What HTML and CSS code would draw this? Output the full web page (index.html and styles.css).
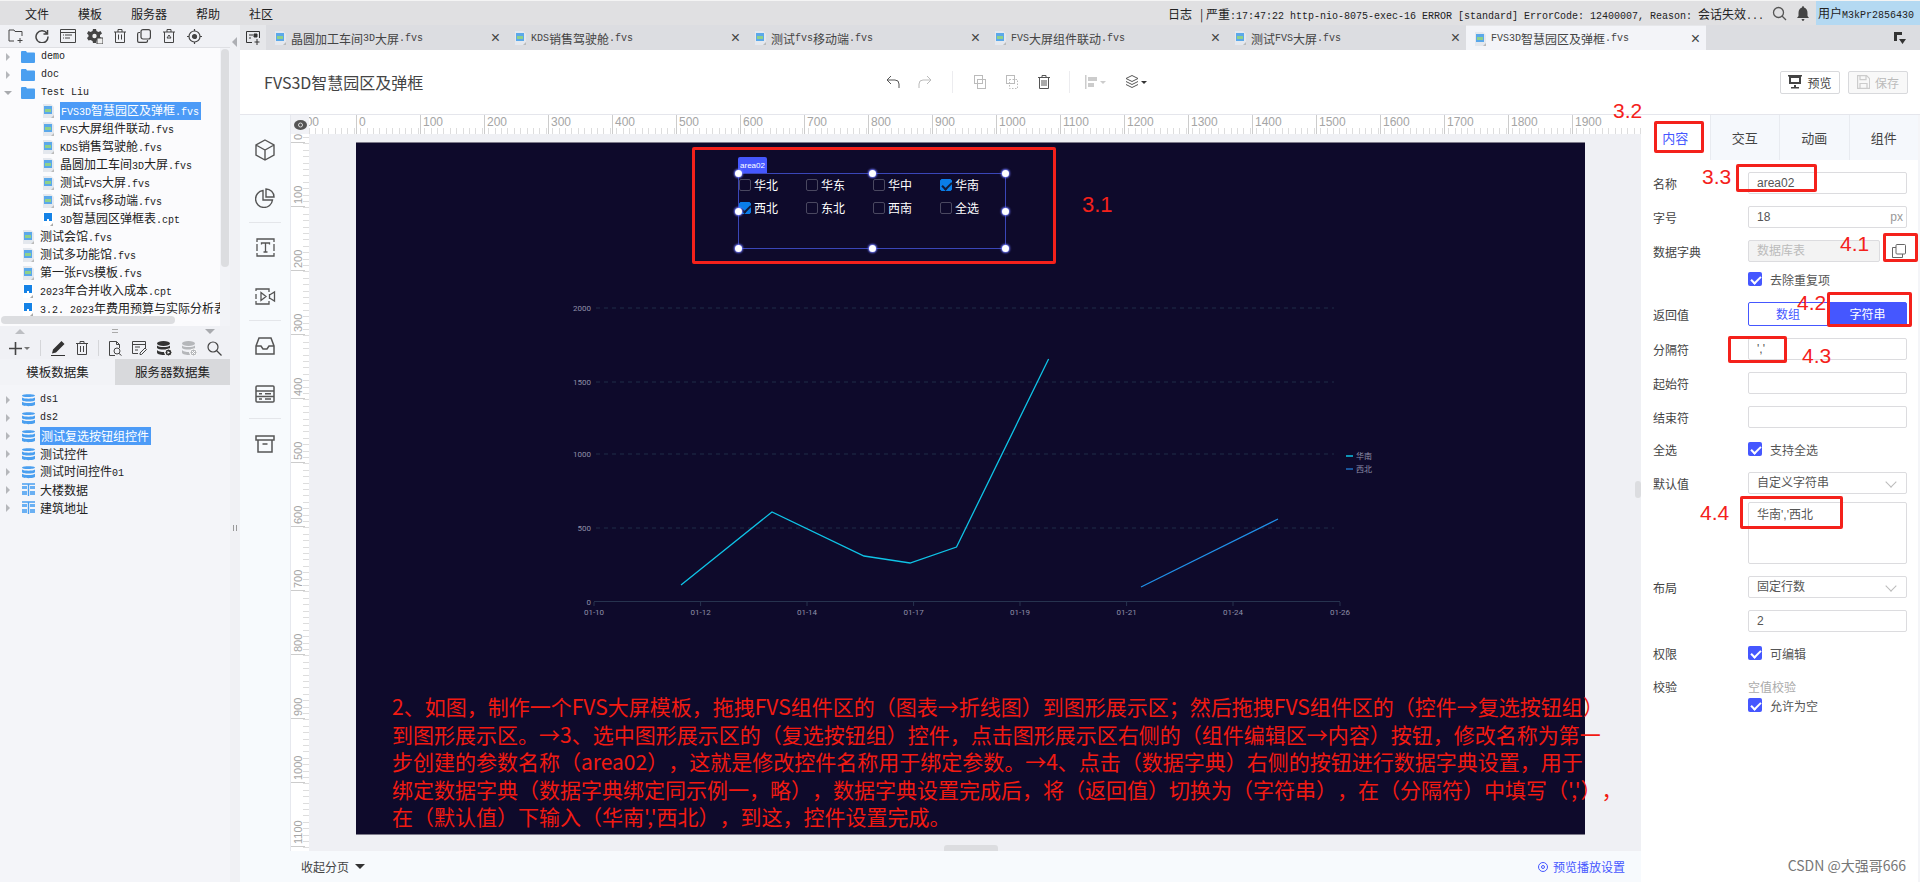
FILE: index.html
```html
<!DOCTYPE html>
<html>
<head>
	<meta charset="utf-8">
	<title>FVS3D智慧园区及弹框</title>
	<link rel="stylesheet" href="styles.css">
</head>
<body>
<svg class="sprite" width="0" height="0">
	<symbol id="i-fvs" viewBox="0 0 12 14"><path d="M1 0h8l3 3v11H1z" fill="#e4e8ee"/><rect x="2" y="2" width="8" height="8" fill="#5aa8ea"/><rect x="3" y="5" width="6" height="3" fill="#8fd08a"/><path d="M9 14l3-3v3z" fill="#bbb"/></symbol>
	<symbol id="i-cpt" viewBox="0 0 12 14"><path d="M1 0h10v14H1z" fill="#fff"/><path d="M2 1h8v8H7V7H5v2H2z" fill="#1582e6"/><path d="M8 14l3-3v3z" fill="#aaa"/></symbol>
	<symbol id="i-folder" viewBox="0 0 14 12"><path d="M0 1q0-1 1-1h4l1 1.500h7q1 0 1 1V11q0 1-1 1H1q-1 0-1-1z" fill="#4a9ff0"/></symbol>
	<symbol id="i-db" viewBox="0 0 13 14"><g fill="#4a9ff0"><path d="M0 2.500C0 .8 13 .8 13 2.500S0 5 0 2.500z"/><path d="M0 4.500c2 1.600 11 1.600 13 0V7c0 2-13 2-13 0z"/><path d="M0 8.800c2 1.600 11 1.600 13 0V11.500c0 2.200-13 2.200-13 0z"/></g></symbol>
	<symbol id="i-table" viewBox="0 0 13 14"><path d="M0 1h13M6.500 1v12" stroke="#4a9ff0" stroke-width="1.400"/><g fill="#6ab0f3"><rect y="3" width="5" height="3"/><rect x="8" y="3" width="5" height="3"/><rect y="8" width="5" height="4"/><rect x="8" y="8" width="5" height="4"/></g></symbol>
</svg>

<div class="topbar">
	<div class="menu"><span>文件</span><span>模板</span><span>服务器</span><span>帮助</span><span>社区</span></div>
	<div class="log">日志</div>
	<div class="log-msg">| 严重<span class="m">:17:47:22 http-nio-8075-exec-16 ERROR [standard] ErrorCode: 12400007, Reason: </span>会话失效<span class="m">...</span></div>
	<svg class="top-icon" width="15" height="15" viewBox="0 0 15 15" fill="none" stroke="#555" stroke-width="1.300"><circle cx="6.500" cy="6.500" r="5"/><path d="M10 10l4 4"/></svg>
	<svg class="top-icon bell" width="12" height="15" viewBox="0 0 12 15" fill="#444"><path d="M6 0q1 0 1 1.500Q10.500 2.500 10.500 7v3l1.500 2H0l1.500-2V7Q1.500 2.500 5 1.500 5 0 6 0zM4.500 13h3q-.5 2-1.500 2t-1.500-2z"/></svg>
	<div class="user">用户<span class="m">M3kPr2856430</span></div>
</div>

<div class="main">
	<aside class="sidebar">
		<div class="side-tools">
			<svg width="16" height="14" viewBox="0 0 16 14" fill="none" stroke="#444"><path d="M6 12H1V1h5l1 1.500h7V7M12 9v5M9.500 11.500h5"/></svg>
			<svg width="14" height="14" viewBox="0 0 14 14" fill="none" stroke="#444" stroke-width="1.500"><path d="M12 4.500A6 6 0 1 0 13 7.500M12.500 1v4h-4"/></svg>
			<svg width="16" height="14" viewBox="0 0 16 14" fill="none" stroke="#444"><path d="M.500.500h15v13H.500zM.500 3.500h15M5 6h7M5 9h5M3 6h1M3 9h1"/></svg>
			<svg width="16" height="15" viewBox="0 0 16 15" fill="#444"><path d="M6 0h3l.5 2 2 1 2-1 1.500 2.500L13 6v2l1.500 1-1 2-2.500-.5-1.500 1L9 14H6l-.5-2-2-1-2 .5L0 9l1.500-1.500V6L0 4.500 1.500 2l2 1 2-1z"/><circle cx="7.500" cy="7" r="2.200" fill="#eee"/><rect x="10" y="9" width="6" height="6" fill="#eee" stroke="#444"/></svg>
			<svg width="12" height="14" viewBox="0 0 12 14" fill="none" stroke="#444"><path d="M0 3h12M4 3V.500h4V3M1.500 3v10.500h9V3M4.500 5.500v5M7.500 5.500v5"/></svg>
			<svg width="14" height="14" viewBox="0 0 14 14" fill="none" stroke="#444" stroke-width="1.200"><rect x="4" y=".6" width="9.400" height="9.400" rx="2"/><path d="M3 3.500H2Q.6 3.500.6 5v7q0 1.400 1.400 1.400h7Q10.500 13.400 10.500 12v-1"/></svg>
			<svg width="14" height="14" viewBox="0 0 14 14" fill="none" stroke="#444"><path d="M1 3h12M5 3V.500h4V3M2.500 3v10.500h9V3M7 6l-2 3h4z"/></svg>
			<svg width="15" height="15" viewBox="0 0 15 15" fill="none" stroke="#444" stroke-width="1.200"><circle cx="7.500" cy="7.500" r="5.500"/><circle cx="7.500" cy="7.500" r="2" fill="#444"/><path d="M7.500 0v2M7.500 13v2M0 7.500h2M13 7.500h2"/></svg>
		</div>
		<div class="file-tree">
			<div class="tree-scroll"></div>
			<div class="tree-scroll-h"></div>
			<div class="tree-row"><i class="arrow"></i><svg class="folder"><use href="#i-folder"/></svg><span class="name m">demo</span></div>
			<div class="tree-row"><i class="arrow"></i><svg class="folder"><use href="#i-folder"/></svg><span class="name m">doc</span></div>
			<div class="tree-row"><i class="arrow open"></i><svg class="folder"><use href="#i-folder"/></svg><span class="name m">Test Liu</span></div>
			<div class="tree-row child"><svg class="file"><use href="#i-fvs"/></svg><span class="name selected"><span class="m">FVS3D</span>智慧园区及弹框<span class="m">.fvs</span></span></div>
			<div class="tree-row child"><svg class="file"><use href="#i-fvs"/></svg><span class="name"><span class="m">FVS</span>大屏组件联动<span class="m">.fvs</span></span></div>
			<div class="tree-row child"><svg class="file"><use href="#i-fvs"/></svg><span class="name"><span class="m">KDS</span>销售驾驶舱<span class="m">.fvs</span></span></div>
			<div class="tree-row child"><svg class="file"><use href="#i-fvs"/></svg><span class="name">晶圆加工车间<span class="m">3D</span>大屏<span class="m">.fvs</span></span></div>
			<div class="tree-row child"><svg class="file"><use href="#i-fvs"/></svg><span class="name">测试<span class="m">FVS</span>大屏<span class="m">.fvs</span></span></div>
			<div class="tree-row child"><svg class="file"><use href="#i-fvs"/></svg><span class="name">测试<span class="m">fvs</span>移动端<span class="m">.fvs</span></span></div>
			<div class="tree-row child"><svg class="file"><use href="#i-cpt"/></svg><span class="name"><span class="m">3D</span>智慧园区弹框表<span class="m">.cpt</span></span></div>
			<div class="tree-row root-file"><svg class="file"><use href="#i-fvs"/></svg><span class="name">测试会馆<span class="m">.fvs</span></span></div>
			<div class="tree-row root-file"><svg class="file"><use href="#i-fvs"/></svg><span class="name">测试多功能馆<span class="m">.fvs</span></span></div>
			<div class="tree-row root-file"><svg class="file"><use href="#i-fvs"/></svg><span class="name">第一张<span class="m">FVS</span>模板<span class="m">.fvs</span></span></div>
			<div class="tree-row root-file"><svg class="file"><use href="#i-cpt"/></svg><span class="name"><span class="m">2023</span>年合并收入成本<span class="m">.cpt</span></span></div>
			<div class="tree-row root-file"><svg class="file"><use href="#i-cpt"/></svg><span class="name"><span class="m">3.2. 2023</span>年费用预算与实际分析表</span></div>
		</div>
		<div class="side-split"><i class="up"></i><i class="grip"></i><i class="down"></i></div>
		<div class="data-tools">
			<svg width="13" height="13" viewBox="0 0 13 13" stroke="#444" stroke-width="1.600"><path d="M6.500 0v13M0 6.500h13"/></svg>
			<i class="caret"></i>
			<b class="tool-line"></b>
			<svg width="15" height="15" viewBox="0 0 15 15" fill="#333"><path d="M10.500 0l3 3-8.500 8.500-4 1 1-4zM0 14h14v1H0z"/></svg>
			<svg width="12" height="14" viewBox="0 0 12 14" fill="none" stroke="#444"><path d="M0 2.500h12M4 2.500V.500h4v2M1.500 2.500v11h9v-11M4.500 5v6M7.500 5v6"/></svg>
			<b class="tool-line"></b>
			<svg width="13" height="15" viewBox="0 0 13 15" fill="none" stroke="#444"><path d="M6 14.500H.500V.500h7l3 3V7M7.500.500v3h3"/><circle cx="8" cy="10" r="3"/><path d="M10 12.500l2.500 2"/></svg>
			<svg width="15" height="14" viewBox="0 0 15 14" fill="none" stroke="#444"><path d="M6 12.500H.500V.500h13V7M.500 3.500h13M3 6h5M3 9h3"/><path d="M8 12l5-5 1.500 1.500-5 5H8z"/></svg>
			<svg width="15" height="15" viewBox="0 0 15 15" fill="#333"><ellipse cx="6.500" cy="2.500" rx="6.500" ry="2.500"/><path d="M0 4.500c2 2 11 2 13 0V7c-2 2-11 2-13 0zM0 9c2 2 6 2 7 2l1 3c-3 0-8-.5-8-2.500z"/><circle cx="11.500" cy="11.500" r="3.500" stroke="#fff"/><path d="M10.500 10l2.500 1.500-2.500 1.500z" fill="#fff"/></svg>
			<svg width="15" height="15" viewBox="0 0 15 15" fill="#b5b7ba"><ellipse cx="6.500" cy="2.500" rx="6.500" ry="2.500"/><path d="M0 4.500c2 2 11 2 13 0V7c-2 2-11 2-13 0zM0 9c2 2 6 2 7 2l1 3c-3 0-8-.5-8-2.500z"/><circle cx="11.500" cy="11.500" r="3.500" stroke="#fff"/><path d="M10 10l3 3M13 10l-3 3" stroke="#fff"/></svg>
			<svg width="15" height="15" viewBox="0 0 15 15" fill="none" stroke="#444" stroke-width="1.200"><circle cx="6" cy="6" r="5"/><path d="M9.500 9.500l5 5"/></svg>
		</div>
		<div class="data-tabs"><div class="data-tab on">模板数据集</div><div class="data-tab">服务器数据集</div></div>
		<div class="data-tree">
			<div class="tree-row ds"><i class="arrow"></i><svg class="db"><use href="#i-db"/></svg><span class="name m">ds1</span></div>
			<div class="tree-row ds"><i class="arrow"></i><svg class="db"><use href="#i-db"/></svg><span class="name m">ds2</span></div>
			<div class="tree-row ds"><i class="arrow"></i><svg class="db"><use href="#i-db"/></svg><span class="name selected">测试复选按钮组控件</span></div>
			<div class="tree-row ds"><i class="arrow"></i><svg class="db"><use href="#i-db"/></svg><span class="name">测试控件</span></div>
			<div class="tree-row ds"><i class="arrow"></i><svg class="db"><use href="#i-db"/></svg><span class="name">测试时间控件<span class="m">01</span></span></div>
			<div class="tree-row ds"><i class="arrow"></i><svg class="db"><use href="#i-table"/></svg><span class="name">大楼数据</span></div>
			<div class="tree-row ds"><i class="arrow"></i><svg class="db"><use href="#i-table"/></svg><span class="name">建筑地址</span></div>
		</div>
	</aside>

	<div class="splitter"><i class="left-arrow"></i><i class="bars"></i></div>

	<div class="content">
		<div class="tabbar">
			<div class="tab-add"><svg width="15" height="14" viewBox="0 0 15 14" fill="none" stroke="#333"><path d="M6 11.500H.500V.500h13V7M3 4h4M3 7h2M11 8v6M8.500 11h5"/><path d="M8 3h3v3H8z" fill="#333"/></svg></div>
			<div class="tab"><svg class="file"><use href="#i-fvs"/></svg>晶圆加工车间<span class="m">3D</span>大屏<span class="m">.fvs</span><em>×</em></div>
			<div class="tab"><svg class="file"><use href="#i-fvs"/></svg><span class="m">KDS</span>销售驾驶舱<span class="m">.fvs</span><em>×</em></div>
			<div class="tab"><svg class="file"><use href="#i-fvs"/></svg>测试<span class="m">fvs</span>移动端<span class="m">.fvs</span><em>×</em></div>
			<div class="tab"><svg class="file"><use href="#i-fvs"/></svg><span class="m">FVS</span>大屏组件联动<span class="m">.fvs</span><em>×</em></div>
			<div class="tab"><svg class="file"><use href="#i-fvs"/></svg>测试<span class="m">FVS</span>大屏<span class="m">.fvs</span><em>×</em></div>
			<div class="tab active"><svg class="file"><use href="#i-fvs"/></svg><span class="m">FVS3D</span>智慧园区及弹框<span class="m">.fvs</span><em>×</em></div>
			<svg class="tab-more" width="12" height="13" viewBox="0 0 12 13" fill="#333"><path d="M0 0h8v3H3v6H0zM5 7h7l-3.500 5z"/></svg>
		</div>

		<div class="titlebar">
			<h1>FVS3D智慧园区及弹框</h1>
			<div class="tools">
				<div class="tool"><svg width="14" height="14" viewBox="0 0 14 14" fill="none" stroke="#555"><path d="M5 1L1 5l4 4M1 5h8q4 0 4 4v4"/></svg></div>
				<div class="tool"><svg width="14" height="14" viewBox="0 0 14 14" fill="none" stroke="#bbb"><path d="M9 1l4 4-4 4M13 5H5q-4 0-4 4v4"/></svg></div>
				<b class="tool-sep"></b>
				<div class="tool"><svg width="12" height="14" viewBox="0 0 12 14" fill="none" stroke="#bbb"><rect x=".5" y=".5" width="8" height="8"/><rect x="3.500" y="4.500" width="8" height="9"/></svg></div>
				<div class="tool"><svg width="12" height="14" viewBox="0 0 12 14" fill="none" stroke="#bbb"><rect x=".5" y=".5" width="8" height="8"/><rect x="3.500" y="4.500" width="8" height="9" stroke-dasharray="1.500"/></svg></div>
				<div class="tool"><svg width="12" height="14" viewBox="0 0 12 14" fill="none" stroke="#555"><path d="M0 2.500h12M4 2.500V.500h4v2M1.500 2.500v11h9v-11" /><path d="M4 5v6M6 5v6M8 5v6"/></svg></div>
				<b class="tool-sep sep-b"></b>
				<div class="tool"><svg width="12" height="14" viewBox="0 0 12 14" fill="#ccc"><path d="M0 0h1.500v14H0zM3 2h9v4H3zM3 8h6v4H3z"/></svg><i class="caret light"></i></div>
				<div class="tool tool-last"><svg width="14" height="15" viewBox="0 0 14 15" fill="none" stroke="#555"><path d="M7 .5l6 3-6 3-6-3zM1 6.500l6 3 6-3M1 9.500l6 3 6-3"/></svg><i class="caret dark"></i></div>
			</div>
			<div class="actions">
				<div class="btn"><svg width="14" height="14" viewBox="0 0 14 14" fill="#444"><path d="M0 0h14v1.500h-1V9H1V1.500H0zM3 3v4h8V3zM6 10h2v2h3v1.500H3V12h3z"/></svg>预览</div>
				<div class="btn off"><svg width="13" height="14" viewBox="0 0 13 14" fill="none" stroke="#ccc" stroke-width="1.200"><path d="M.6.6h9l3 3v9.800H.6zM3 .6v4h6v-4M3 13V8.500h7V13"/></svg>保存</div>
			</div>
		</div>

		<div class="work">
			<div class="stage">
				<div class="stage-row">
					<nav class="widget-bar">
						<div class="slot"><svg width="20" height="22" viewBox="0 0 20 22" fill="none" stroke="#555" stroke-width="1.400"><path d="M10 1l9 5v10l-9 5-9-5V6zM1 6l9 5 9-5M10 11v10"/></svg></div>
						<div class="slot line"><svg width="20" height="20" viewBox="0 0 20 20" fill="none" stroke="#555" stroke-width="1.400"><path d="M8 2.500a8.500 8.500 0 1 0 9.500 9.500H8zM11 1v8h8a8 8 0 0 0-8-8z"/></svg></div>
						<div class="slot"><svg width="19" height="19" viewBox="0 0 19 19" fill="none" stroke="#555" stroke-width="1.300"><path d="M1 4V1h17v3M1 15v3h17v-3M1 6v7M18 6v7M5.500 6.500V5h8v1.500M9.500 5v9M7.500 14h4"/></svg></div>
						<div class="slot line"><svg width="21" height="17" viewBox="0 0 21 17" fill="none" stroke="#555" stroke-width="1.300"><path d="M1 3V1h13v3M1 13v3h13v-3M1 6v5M14.500 6v5M14.500 7l5-3v9l-5-3M6 4.500l5 4-5 4z"/></svg></div>
						<div class="slot"><svg width="20" height="18" viewBox="0 0 20 18" fill="none" stroke="#555" stroke-width="1.500"><path d="M1 9l3-8h12l3 8v8H1zM1 9h5l2 3h4l2-3h5"/></svg></div>
						<div class="slot line"><svg width="20" height="18" viewBox="0 0 20 18" fill="none" stroke="#555" stroke-width="1.500"><rect x="1" y="1" width="18" height="16" rx="1"/><path d="M1 6h18M1 11.500h18M4 8.800h3M10 8.800h6M4 14h3M10 14h6"/></svg></div>
						<div class="slot"><svg width="20" height="18" viewBox="0 0 20 18" fill="none" stroke="#555" stroke-width="1.500"><path d="M1 1h18v4H1zM3 5v12h14V5M7.500 9h5"/></svg></div>
					</nav>
					<div class="ruler-side">
						<div class="eye"><svg width="13" height="10" viewBox="0 0 13 10"><ellipse cx="6.500" cy="5" rx="6.500" ry="5" fill="#555"/><circle cx="6.500" cy="5" r="2" fill="none" stroke="#ddd"/></svg></div>
						<div class="ruler-v">
							<span>0</span><span>100</span><span>200</span><span>300</span><span>400</span><span>500</span><span>600</span><span>700</span><span>800</span><span>900</span><span>1000</span><span>1100</span>
						</div>
					</div>
					<div class="canvas-wrap">
						<div class="ruler-h">
							<span>-100</span><span>0</span><span>100</span><span>200</span><span>300</span><span>400</span><span>500</span><span>600</span><span>700</span><span>800</span><span>900</span><span>1000</span><span>1100</span><span>1200</span><span>1300</span><span>1400</span><span>1500</span><span>1600</span><span>1700</span><span>1800</span><span>1900</span>
						</div>
						<div class="canvas-area">
							<div class="canvas">
								<div class="combo">
									<div class="combo-tag">area02</div>
									<div class="combo-grid">
										<label class="opt"><i></i>华北</label><label class="opt"><i></i>华东</label><label class="opt"><i></i>华中</label><label class="opt"><i class="on"></i>华南</label>
										<label class="opt"><i class="on"></i>西北</label><label class="opt"><i></i>东北</label><label class="opt"><i></i>西南</label><label class="opt"><i></i>全选</label>
									</div>
									<u class="dot tl"></u><u class="dot tc"></u><u class="dot tr"></u><u class="dot ml"></u><u class="dot mr"></u><u class="dot bl"></u><u class="dot bc"></u><u class="dot br"></u>
								</div>

								<svg class="chart" width="760" height="340" viewBox="0 0 760 340">
									<g stroke="#1f2c49" stroke-dasharray="4 4">
										<path d="M2 20H740M2 94H740M2 166H740M2 240H740"/>
									</g>
									<path d="M0 313.500H746" stroke="#27334f"/>
									<path d="M0 314v4M106.600 314v4M213 314v4M319.600 314v4M426 314v4M532.600 314v4M639 314v4M746 314v4" stroke="#27334f"/>
									<g class="axis" text-anchor="end">
										<text x="-3" y="23">2000</text><text x="-3" y="97">1500</text><text x="-3" y="169">1000</text><text x="-3" y="243">500</text><text x="-3" y="317">0</text>
									</g>
									<g class="axis" text-anchor="middle">
										<text x="0" y="327">01-10</text><text x="106.600" y="327">01-12</text><text x="213" y="327">01-14</text><text x="319.600" y="327">01-17</text><text x="426" y="327">01-19</text><text x="532.600" y="327">01-21</text><text x="639" y="327">01-24</text><text x="746" y="327">01-26</text>
									</g>
									<polyline points="87,297 178,224 270,268 316,275 362.500,259 454.600,71" fill="none" stroke="#0fc3e6" stroke-width="1.300"/>
									<polyline points="547,299 684,231" fill="none" stroke="#2190e8" stroke-width="1.300"/>
									<path d="M752 168h7" stroke="#0fc3e6" stroke-width="1.500"/>
									<path d="M752 181h7" stroke="#1f6fc0" stroke-width="1.500"/>
									<text class="axis" x="762" y="171">华南</text>
									<text class="axis" x="762" y="184">西北</text>
								</svg>

								<div class="note">
									<div>2、如图，制作一个FVS大屏模板，拖拽FVS组件区的（图表→折线图）到图形展示区；然后拖拽FVS组件区的（控件→复选按钮组）</div>
									<div>到图形展示区。→3、选中图形展示区的（复选按钮组）控件，点击图形展示区右侧的（组件编辑区→内容）按钮，修改名称为第一</div>
									<div>步创建的参数名称（area02），这就是修改控件名称用于绑定参数。→4、点击（数据字典）右侧的按钮进行数据字典设置，用于</div>
									<div>绑定数据字典（数据字典绑定同示例一，略），数据字典设置完成后，将（返回值）切换为（字符串），在（分隔符）中填写（','），</div>
									<div>在（默认值）下输入（华南','西北），到这，控件设置完成。</div>
								</div>
							</div>
							<div class="handle-v"></div>
							<div class="handle-h"></div>
						</div>
					</div>
				</div>
				<div class="pager">
					<div class="pager-left">收起分页<i class="caret dark big"></i></div>
					<div class="pager-right"><svg width="10" height="10" viewBox="0 0 10 10" fill="none" stroke="#4557ff"><circle cx="5" cy="5" r="4.500"/><circle cx="5" cy="5" r="1.500"/></svg>预览播放设置</div>
				</div>
			</div>

			<aside class="panel">
				<div class="panel-tabs"><div class="panel-tab on">内容</div><div class="panel-tab">交互</div><div class="panel-tab">动画</div><div class="panel-tab">组件</div></div>
				<div class="form">
					<div class="row"><label>名称</label><div class="field">area02</div></div>
					<div class="row"><label>字号</label><div class="field between">18<span class="unit">px</span></div></div>
					<div class="row row-s"><label>数据字典</label><div class="field disabled">数据库表</div>
						<svg class="dict-icon" width="14" height="14" viewBox="0 0 14 14" fill="none" stroke="#666"><rect x="4" y=".5" width="9.500" height="9.500" rx="1"/><path d="M4 3.500H.5v10h10V10"/></svg>
					</div>
					<div class="row check-row row-t"><label></label><span class="check"></span><span class="check-text">去除重复项</span></div>
					<div class="row seg-row"><label>返回值</label><div class="seg">数组</div><div class="seg on">字符串</div></div>
					<div class="row"><label>分隔符</label><div class="field">','</div></div>
					<div class="row"><label>起始符</label><div class="field"></div></div>
					<div class="row row-m"><label>结束符</label><div class="field"></div></div>
					<div class="row check-row row-t"><label>全选</label><span class="check"></span><span class="check-text">支持全选</span></div>
					<div class="row row-xs"><label>默认值</label><div class="field between">自定义字符串<i class="chev"></i></div></div>
					<div class="row area-row"><label></label><div class="field area">华南','西北</div></div>
					<div class="row"><label>布局</label><div class="field between">固定行数<i class="chev"></i></div></div>
					<div class="row row-m"><label></label><div class="field">2</div></div>
					<div class="row check-row row-b"><label>权限</label><span class="check"></span><span class="check-text">可编辑</span></div>
					<div class="row text-row"><label>校验</label><span class="muted">空值校验</span></div>
					<div class="row check-row"><label></label><span class="check"></span><span class="check-text">允许为空</span></div>
				</div>
			</aside>
		</div>
	</div>
</div>

<!-- 红色标注 -->
<div class="mark mk-31">3.1</div>
<div class="mark mk-32">3.2</div>
<div class="mark mk-33">3.3</div>
<div class="mark mk-41">4.1</div>
<div class="mark mk-42">4.2</div>
<div class="mark mk-43">4.3</div>
<div class="mark mk-44">4.4</div>
<div class="red-box box-31"></div>
<div class="red-box box-32"></div>
<div class="red-box box-33"></div>
<div class="red-box box-41"></div>
<div class="red-box box-42"></div>
<div class="red-box box-43"></div>
<div class="red-box box-44"></div>
<div class="watermark">CSDN @大强哥666</div>
</body>
</html>
```
FILE: styles.css
```css
* {
	box-sizing: border-box;
}
html, body {
	margin: 0;
	height: 882px;
	overflow: hidden;
}
body {
	position: relative;
	width: 1920px;
	font-family: "Noto Sans CJK SC", "Liberation Sans", sans-serif;
	font-size: 12px;
	color: #333;
	background: #f1f2f6;
}
.sprite {
	position: absolute;
}
.m {
	font-family: "Liberation Mono", monospace;
	font-size: 10px;
}
i, em, u, b {
	font-style: normal;
	text-decoration: none;
}

/* top menu */
.topbar {
	height: 25px;
	display: flex;
	align-items: center;
	background: #e0e0e2;
	border-top: 1px solid #f4f4f4;
	color: #222;
}
.menu {
	display: flex;
	padding-left: 25px;
	gap: 29px;
	width: 1168px;
}
.log {
	width: 32px;
}
.log-msg {
	width: 572px;
	white-space: nowrap;
}
.top-icon {
	margin-right: 10px;
}
.top-icon.bell {
	margin-right: 0;
	margin-left: 0;
}
.user {
	margin-left: auto;
	width: 104px;
	height: 24px;
	line-height: 24px;
	padding-left: 2px;
	background: #b4d9f2;
	white-space: nowrap;
}

.main {
	display: flex;
	height: 857px;
}

/* left side */
.sidebar {
	width: 230px;
	flex: none;
	background: #f4f5f9;
	display: flex;
	flex-direction: column;
}
.side-tools {
	height: 23px;
	display: flex;
	align-items: center;
	gap: 11px;
	padding-left: 8px;
	background: #f0f1f5;
	border-bottom: 1px solid #dfe0e4;
}
.file-tree {
	position: relative;
	height: 278px;
	padding-top: 0;
	background: #fbfbfd;
	border-right: 10px solid #f2f3f7;
	overflow: visible;
}
.tree-scroll {
	position: absolute;
	left: 221px;
	top: 1px;
	width: 8px;
	height: 218px;
	border-radius: 4px;
	background: #dcdde0;
}
.tree-scroll-h {
	position: absolute;
	left: 1px;
	top: 268px;
	width: 174px;
	height: 8px;
	border-radius: 4px;
	background: #dcdde0;
}
.tree-row {
	position: relative;
	height: 18px;
	display: flex;
	align-items: center;
	white-space: nowrap;
	overflow: hidden;
	color: #222;
}
.arrow {
	position: absolute;
	left: 6px;
	top: 5px;
	border-style: solid;
	border-width: 4px 0 4px 4px;
	border-color: transparent transparent transparent #b5b7bb;
}
.arrow.open {
	left: 4px;
	top: 7px;
	border-width: 4px 4px 0 4px;
	border-color: #a8aaae transparent transparent transparent;
}
.folder {
	width: 14px;
	height: 12px;
	margin-left: 21px;
	margin-right: 6px;
}
.file {
	width: 12px;
	height: 14px;
	flex: none;
}
.tree-row.child {
	padding-left: 42px;
}
.tree-row.child .file {
	margin-right: 6px;
}
.tree-row.root-file {
	padding-left: 22px;
}
.tree-row.root-file .file {
	margin-right: 6px;
}
.name {
	display: block;
	line-height: 18px;
}
.name.m {
	font-size: 10px;
}
.name.selected {
	padding: 0 2px 0 1px;
	background: #4c9bf7;
	color: #fff;
}
.side-split {
	position: relative;
	height: 11px;
	background: #f0f1f5;
}
.up, .down, .grip {
	position: absolute;
	top: 3px;
}
.up {
	left: 15px;
	border-style: solid;
	border-width: 0 5px 5px 5px;
	border-color: transparent transparent #bdbfc3 transparent;
}
.down {
	left: 205px;
	border-style: solid;
	border-width: 5px 5px 0 5px;
	border-color: #a9abaf transparent transparent transparent;
}
.grip {
	left: 112px;
	width: 6px;
	height: 4px;
	border-top: 1px solid #aaa;
	border-bottom: 1px solid #aaa;
}
.data-tools {
	height: 22px;
	display: flex;
	align-items: center;
	gap: 10px;
	padding-left: 9px;
	background: #f0f1f5;
}
.data-tools .caret {
	margin-left: -8px;
}
.caret {
	display: inline-block;
	border-style: solid;
	border-width: 3px 3px 0 3px;
	border-color: #777 transparent transparent transparent;
}
.caret.light {
	border-top-color: #ccc;
	margin-left: 3px;
}
.caret.dark {
	border-top-color: #333;
	margin-left: 2px;
}
.caret.big {
	border-width: 5px 5px 0 5px;
	margin-left: 6px;
}
.tool-line {
	width: 1px;
	height: 16px;
	background: #d5d6d9;
}
.data-tabs {
	display: flex;
	height: 26px;
	font-size: 12.500px;
	color: #222;
}
.data-tab {
	width: 115px;
	line-height: 25px;
	text-align: center;
	background: #d8d9dc;
}
.data-tab.on {
	background: #f2f3f7;
}
.data-tree {
	padding-top: 6px;
	flex: 1;
}
.db {
	width: 13px;
	height: 14px;
	margin-left: 22px;
	margin-right: 5px;
}

/* thin column between side and content */
.splitter {
	position: relative;
	width: 10px;
	flex: none;
	background: #f0f1f4;
}
.left-arrow {
	position: absolute;
	left: 2px;
	top: 12px;
	border-style: solid;
	border-width: 5px 5px 5px 0;
	border-color: transparent #aeb0b4 transparent transparent;
}
.bars {
	position: absolute;
	left: 3px;
	top: 500px;
	width: 4px;
	height: 6px;
	border-left: 1px solid #999;
	border-right: 1px solid #999;
}

.content {
	flex: 1;
	display: flex;
	flex-direction: column;
	min-width: 0;
}
.tabbar {
	height: 25px;
	flex: none;
	display: flex;
	background: #dcdde1;
	align-items: stretch;
	position: relative;
}
.tab-add {
	width: 26px;
	display: flex;
	align-items: center;
	justify-content: center;
	background: #e6e7ea;
}
.tab {
	position: relative;
	width: 240px;
	display: flex;
	align-items: center;
	padding-left: 8px;
	padding-top: 1px;
	color: #444;
	white-space: nowrap;
}
.tab .file {
	margin-right: 5px;
}
.tab em {
	position: absolute;
	right: 6px;
	top: 3px;
	font-size: 16px;
	line-height: 20px;
	color: #444;
	font-family: "Liberation Sans", sans-serif;
}
.tab.active {
	background: #f3f4f8;
	border-top: 1px solid #e6e7ea;
}
.tab-more {
	position: absolute;
	left: 1654px;
	top: 7px;
}

.titlebar {
	height: 65px;
	flex: none;
	display: flex;
	align-items: center;
	background: #fff;
	border-bottom: 1px solid #e5e6ec;
}
.titlebar h1 {
	margin: 0;
	width: 637px;
	padding-left: 24px;
	font-size: 16px;
	font-weight: 400;
	color: #444;
}
.tools {
	display: flex;
	align-items: center;
}
.tool {
	width: 32px;
	display: flex;
	align-items: center;
	justify-content: center;
}
.tool-sep {
	width: 1px;
	height: 22px;
	margin: 0 11px;
	background: #ececef;
}
.tool-sep.sep-b {
	margin: 0 9px;
}
.tool-last {
	margin-left: 9px;
}
.actions {
	margin-left: auto;
	display: flex;
	gap: 8px;
	padding-right: 12px;
}
.btn {
	width: 60px;
	height: 23px;
	display: flex;
	align-items: center;
	justify-content: center;
	gap: 5px;
	border: 1px solid #d8d9dc;
	border-radius: 2px;
	color: #444;
}
.btn.off {
	color: #bbb;
	background: #f8f8f8;
}

.work {
	flex: 1;
	display: flex;
	min-height: 0;
}
.stage {
	width: 1401px;
	flex: none;
	display: flex;
	flex-direction: column;
}
.stage-row {
	flex: 1;
	display: flex;
	min-height: 0;
}
.widget-bar {
	width: 50px;
	flex: none;
	display: flex;
	flex-direction: column;
	align-items: center;
	padding-top: 10px;
	background: #f7fafd;
}
.slot {
	width: 32px;
	height: 49px;
	flex: none;
	display: flex;
	align-items: center;
	justify-content: center;
}
.slot.line {
	border-bottom: 1px solid #e4e6ea;
}
.ruler-side {
	width: 19px;
	flex: none;
	background: #fff;
	border-left: 1px solid #e6e8ee;
}
.eye {
	height: 19px;
	display: flex;
	align-items: center;
	justify-content: center;
	background: #f1f2f6;
}
.ruler-v {
	height: 717px;
	overflow: hidden;
	background: repeating-linear-gradient(to bottom, #ddd 0, #ddd 1px, transparent 1px, transparent 6.400px) right top / 6px 100% no-repeat;
	background-position: right 2.600px;
}
.ruler-v span {
	display: block;
	height: 64px;
	width: 14px;
	writing-mode: vertical-rl;
	transform: rotate(180deg);
	font-size: 11px;
	line-height: 14px;
	color: #a5a5a5;
	font-family: "Liberation Sans", sans-serif;
	text-align: left;
	padding-top: 2px;
	border-top: 1px solid #ccc;
}
.ruler-v span:first-child {
	margin-top: -55px;
}
.canvas-wrap {
	flex: 1;
	min-width: 0;
	display: flex;
	flex-direction: column;
}
.ruler-h {
	height: 19px;
	flex: none;
	display: flex;
	overflow: hidden;
	background: #fff;
	position: relative;
}
.ruler-h::after {
	content: "";
	position: absolute;
	left: 0;
	right: 0;
	bottom: 0;
	height: 6px;
	background: repeating-linear-gradient(to right, #ddd 0, #ddd 1px, transparent 1px, transparent 6.400px);
}
.ruler-h span {
	flex: 0 0 64px;
	border-left: 1px solid #ccc;
	padding-left: 2px;
	font-size: 12px;
	line-height: 14px;
	color: #a5a5a5;
	font-family: "Liberation Sans", sans-serif;
}
.ruler-h span:first-child {
	margin-left: -17px;
}
.canvas-area {
	flex: 1;
	position: relative;
	background: #eff0f4;
	padding: 9px 0 0 47px;
	min-height: 0;
}
.canvas {
	position: relative;
	width: 1229px;
	height: 691px;
	background: #0e0a2b;
	box-shadow: 0 -1px 0 #7d7b8a, 0 1px 0 #7d7b8a;
}
.handle-v {
	position: absolute;
	right: 0;
	top: 347px;
	width: 6px;
	height: 17px;
	border-radius: 3px;
	background: #dcdde0;
}
.handle-h {
	position: absolute;
	left: 635px;
	bottom: 0;
	width: 54px;
	height: 6px;
	border-radius: 3px 3px 0 0;
	background: #dcdde0;
}

/* checkbox group widget */
.combo {
	position: absolute;
	left: 382px;
	top: 30px;
	width: 268px;
	height: 76px;
	border: 1px solid #3a46b8;
}
.combo-tag {
	position: absolute;
	left: -1px;
	top: -17px;
	height: 16px;
	width: 29px;
	background: #4557ff;
	border-radius: 2px 2px 0 0;
	color: #fff;
	font-family: "Liberation Sans", sans-serif;
	font-size: 8px;
	line-height: 17px;
	text-align: center;
}
.combo-grid {
	display: grid;
	grid-template-columns: repeat(4, 67px);
	grid-auto-rows: 23px;
	margin-top: -1px;
}
.opt {
	display: flex;
	align-items: center;
	gap: 3px;
	color: #fff;
	font-size: 12px;
}
.opt i {
	width: 12px;
	height: 12px;
	border: 1px solid #4a4860;
	border-radius: 2px;
	position: relative;
}
.opt i.on {
	background: #0a7de8;
	border-color: #0a7de8;
}
.opt i.on::after {
	content: "";
	position: absolute;
	left: 3px;
	top: 0;
	width: 4px;
	height: 8px;
	border: solid #111a3a;
	border-width: 0 2px 2px 0;
	transform: rotate(45deg);
}
.dot {
	position: absolute;
	width: 7px;
	height: 7px;
	border-radius: 50%;
	background: #fff;
	box-shadow: 0 0 2px 1px #6f78ff;
}
.tl { left: -4px; top: -4px; }
.tc { left: 130px; top: -4px; }
.tr { right: -4px; top: -4px; }
.ml { left: -4px; top: 34px; }
.mr { right: -4px; top: 34px; }
.bl { left: -4px; bottom: -4px; }
.bc { left: 130px; bottom: -4px; }
.br { right: -4px; bottom: -4px; }

.chart {
	position: absolute;
	left: 238px;
	top: 145px;
	overflow: visible;
}
.axis {
	font-family: "Roboto", "Noto Sans CJK SC", sans-serif;
	font-size: 8px;
	fill: #8f8fa8;
}
.note {
	position: absolute;
	left: 36px;
	top: 550px;
	white-space: nowrap;
	font-size: 21px;
	line-height: 27.500px;
	color: #f21a12;
	text-spacing-trim: space-all;
}

.pager {
	height: 31px;
	flex: none;
	display: flex;
	align-items: center;
	justify-content: space-between;
	padding: 0 16px 0 61px;
	background: #f7fafd;
}
.pager-left {
	display: flex;
	align-items: center;
	color: #444;
}
.pager-right {
	display: flex;
	align-items: center;
	gap: 5px;
	color: #4557ff;
}

/* right panel */
.panel {
	width: 279px;
	flex: none;
	background: #fff;
	border-right: 2px solid #f4f5f8;
}
.panel-tabs {
	display: flex;
	height: 45px;
}
.panel-tab {
	flex: 1;
	line-height: 45px;
	text-align: center;
	font-size: 13px;
	background: #f5f8fc;
	border-left: 1px solid #e8ebf0;
	color: #444;
}
.panel-tab.on {
	background: #fff;
	color: #4557ff;
	border-left: 0;
}
.form {
	padding: 12px 0 0 12px;
}
.row {
	display: flex;
	align-items: center;
	height: 22px;
	margin-bottom: 12px;
	position: relative;
}
.row label {
	width: 95px;
	flex: none;
	color: #444;
	font-size: 12px;
}
.field {
	width: 159px;
	height: 100%;
	padding: 0 8px;
	line-height: 20px;
	border: 1px solid #dcdcdf;
	border-radius: 2px;
	font-family: "Liberation Sans", "Noto Sans CJK SC", sans-serif;
	color: #555;
	display: flex;
	align-items: center;
}
.field.between {
	justify-content: space-between;
}
.field.disabled {
	width: 132px;
	background: #f3f3f3;
	color: #bbb;
}
.unit {
	color: #999;
	margin-right: -5px;
}
.dict-icon {
	margin-left: 12px;
}
.row-s {
	margin-bottom: 10px;
}
.check-row {
	height: 14px;
}
.row-t {
	margin-bottom: 16px;
}
.row-m {
	margin-bottom: 14px;
}
.row-xs {
	margin-bottom: 8px;
}
.row-b {
	margin-bottom: 18px;
}
.seg-row {
	height: 24px;
}
.seg {
	width: 80px;
	height: 100%;
	border: 1px solid #4557ff;
	text-align: center;
	line-height: 22px;
	color: #4557ff;
	border-radius: 2px 0 0 2px;
}
.seg.on {
	width: 79px;
	background: #4557ff;
	color: #fff;
	border-radius: 0 2px 2px 0;
}
.area-row {
	height: 62px;
}
.field.area {
	align-items: flex-start;
	padding-top: 2px;
}
.chev {
	width: 8px;
	height: 8px;
	margin: -3px 3px 0 0;
	border: solid #bbb;
	border-width: 0 1px 1px 0;
	transform: rotate(45deg);
}
.check {
	position: relative;
	width: 14px;
	height: 14px;
	border-radius: 2px;
	background: #4557ff;
}
.check::after {
	content: "";
	position: absolute;
	left: 5px;
	top: 2px;
	width: 4px;
	height: 8px;
	border: solid #fff;
	border-width: 0 2px 2px 0;
	transform: rotate(45deg);
}
.check-text {
	margin-left: 8px;
	color: #555;
}
.muted {
	color: #aaa;
}
.text-row {
	height: 16px;
	margin-bottom: 4px;
}

/* annotations on top of the screenshot */
.mark {
	position: absolute;
	font-family: "Liberation Sans", sans-serif;
	font-size: 21px;
	line-height: 24px;
	color: #f4211b;
}
.mk-31 { left: 1082px; top: 193px; font-size: 22px; }
.mk-32 { left: 1613px; top: 99px; }
.mk-33 { left: 1702px; top: 165px; }
.mk-41 { left: 1840px; top: 232px; }
.mk-42 { left: 1797px; top: 291px; }
.mk-43 { left: 1802px; top: 344px; }
.mk-44 { left: 1700px; top: 501px; }
.red-box {
	position: absolute;
	border: 3px solid #f4211b;
	border-radius: 2px;
}
.box-31 { left: 692px; top: 147px; width: 364px; height: 117px; }
.box-32 { left: 1654px; top: 121px; width: 50px; height: 32px; }
.box-33 { left: 1736px; top: 164px; width: 81px; height: 28px; }
.box-41 { left: 1883px; top: 233px; width: 35px; height: 29px; }
.box-42 { left: 1827px; top: 292px; width: 85px; height: 35px; }
.box-43 { left: 1728px; top: 336px; width: 59px; height: 27px; }
.box-44 { left: 1740px; top: 496px; width: 103px; height: 33px; }
.watermark {
	position: absolute;
	right: 14px;
	bottom: 7px;
	font-size: 14px;
	line-height: 20px;
	color: #777;
}
```
